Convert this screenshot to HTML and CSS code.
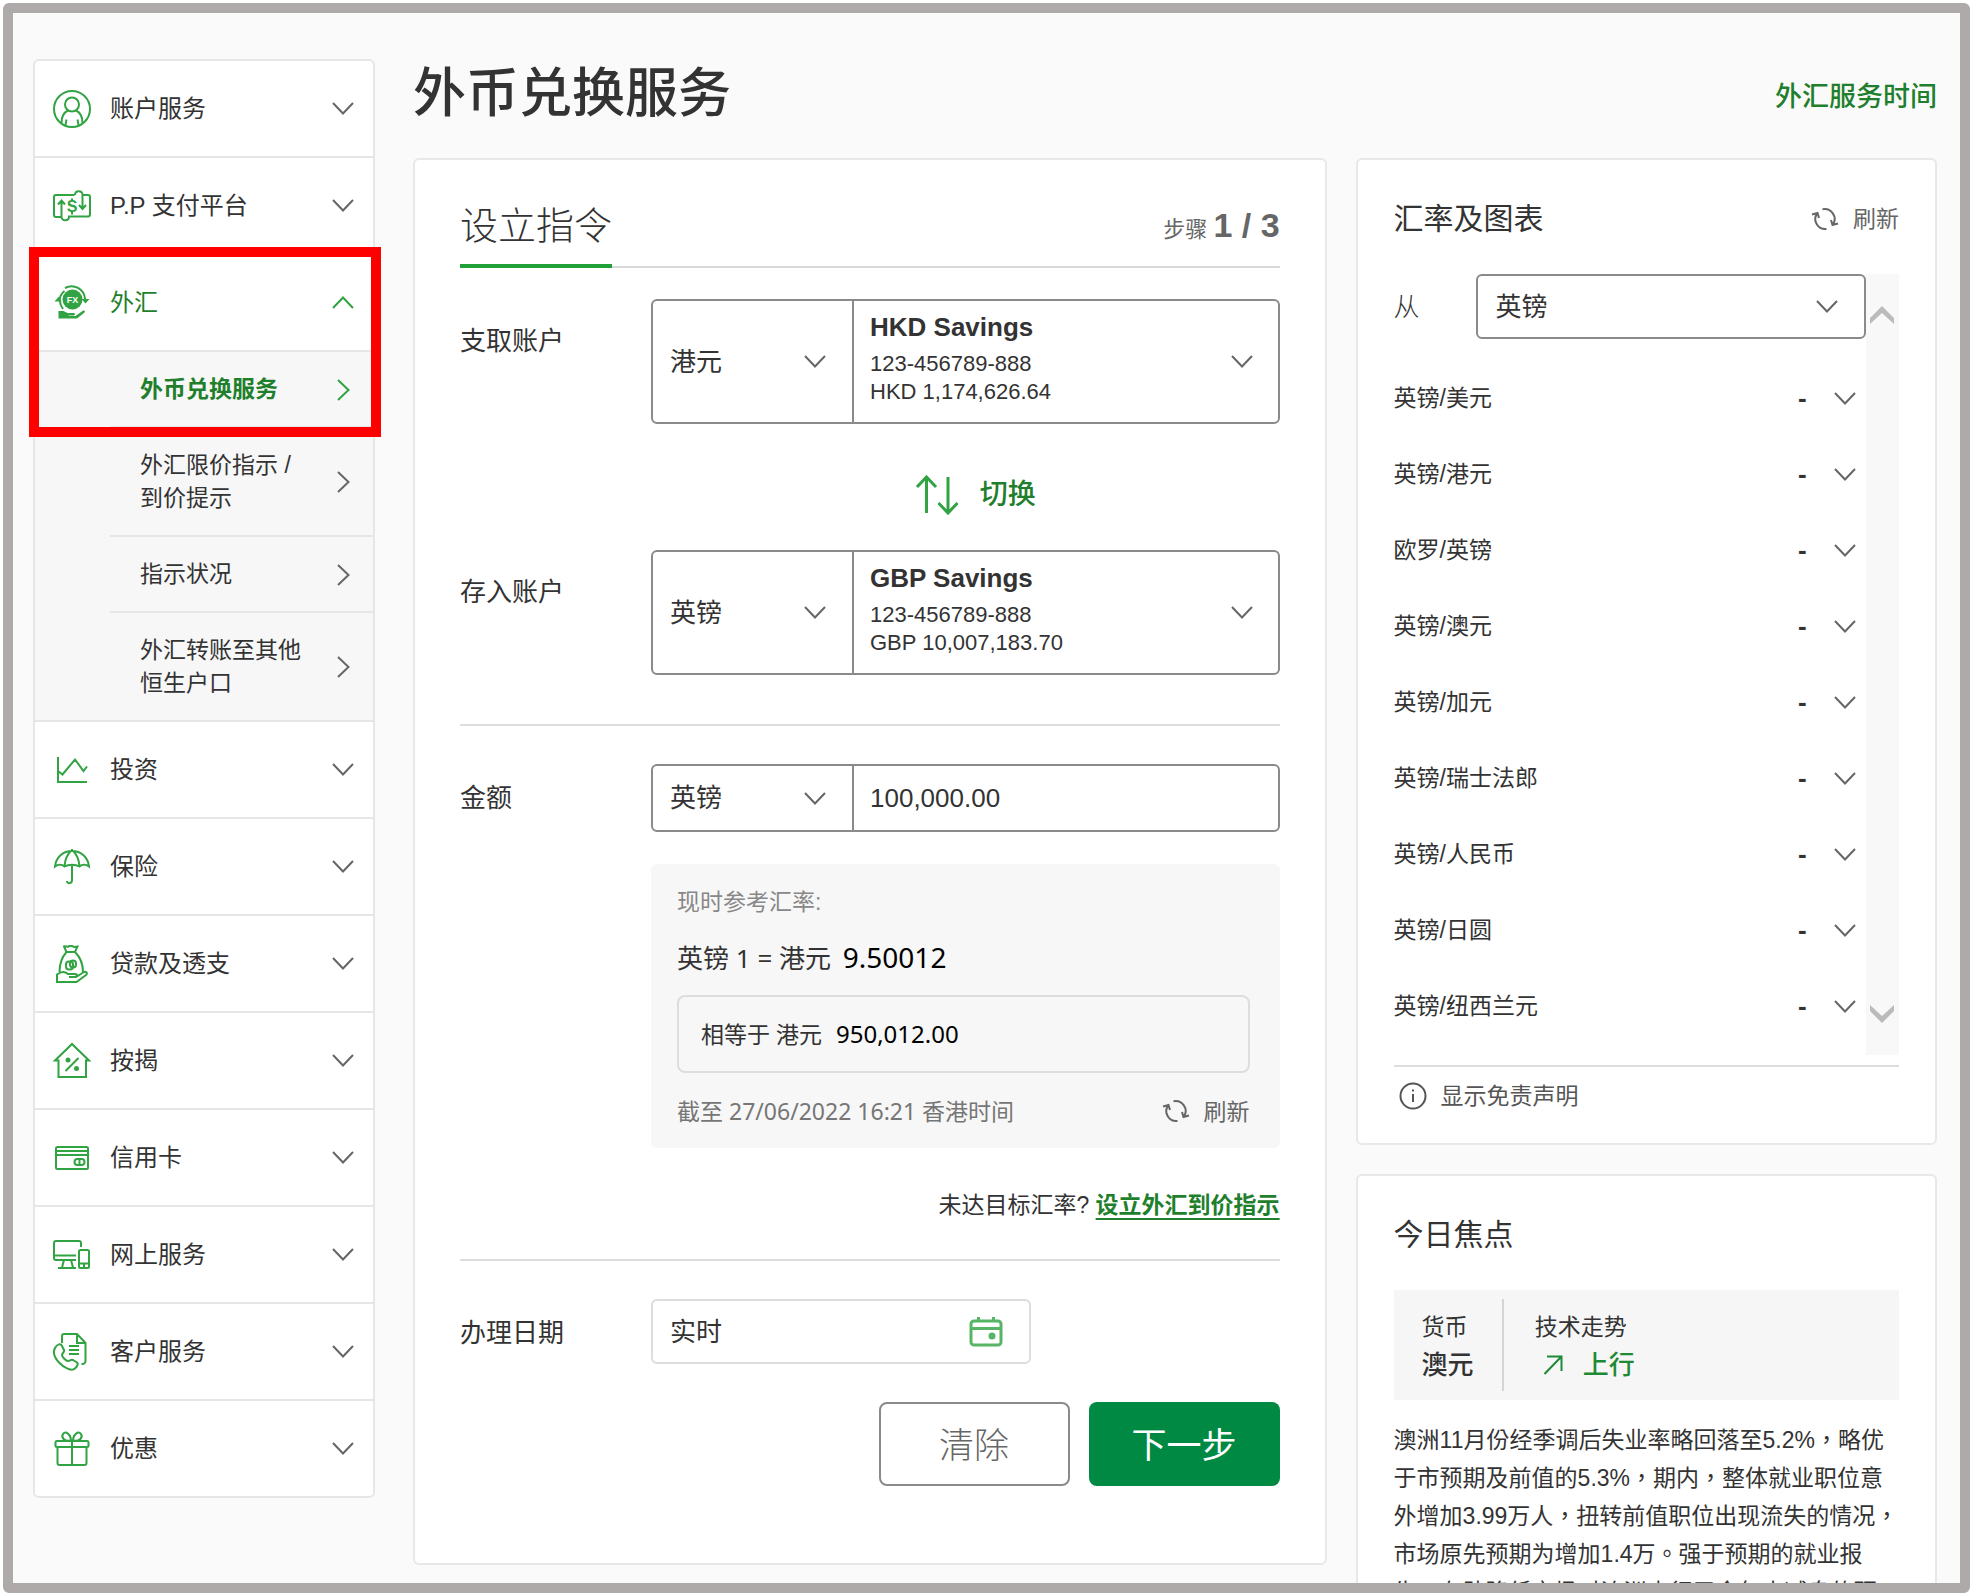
FILE: index.html
```html
<!DOCTYPE html>
<html lang="zh-Hans">
<head>
<meta charset="utf-8">
<meta name="viewport" content="width=device-width, initial-scale=1">
<title>外币兑换服务</title>
<link rel="stylesheet" href="styles.css">
</head>
<body>
<svg class="sprite" aria-hidden="true">
  <symbol id="down" viewBox="0 0 22 13"><path d="M1 1l10 10.500L21 1"/></symbol>
  <symbol id="up" viewBox="0 0 22 13"><path d="M1 12L11 1.500 21 12"/></symbol>
  <symbol id="right" viewBox="0 0 13 22"><path d="M1 1l10.500 10L1 21"/></symbol>
  <symbol id="refresh" viewBox="0 0 28 24"><path d="M6 6.500A10 10 0 0 0 15.500 22M11.500 2.300A10 10 0 0 1 22 17.500M1 7.500l5.500-1.500 1.500 5M27 16.500L21.500 18 20 13"/></symbol>
</svg>
<div class="frame">
  <nav class="sidebar" aria-label="主目录">
    <ul class="menu">
      <li><button class="menu-row" type="button">
        <svg class="icon" viewBox="0 0 38 38"><circle cx="19" cy="19" r="18"/><circle cx="19" cy="14.500" r="7"/><path d="M8.500 33c0-6.500 2.500-10.500 6.500-12.500M29.500 33c0-6.500-2.500-10.500-6.500-12.500M13.500 29.500L12.500 35M24.500 29.500l1 5.500"/></svg>
        <span>账户服务</span><svg class="chevron"><use href="#down"/></svg></button></li>
      <li><button class="menu-row" type="button">
        <svg class="icon" viewBox="0 0 38 38"><path d="M21.500 8H3a2 2 0 0 0-2 2v18a2 2 0 0 0 2 2h5.500V14M5 17.500L8.500 13.500 12 17.500M8.500 30c0 4.500 7.500 4.500 7.500-.500h19a2 2 0 0 0 2-2V10a2 2 0 0 0-2-2h-5.500v13M26 18l3.500 4L33 18M29.500 8c0-5-7.500-5-7.500 0"/><text x="19" y="25" class="icon-text">S</text><path d="M19 11.500v2.500M19 25v2.500"/></svg>
        <span>P.P 支付平台</span><svg class="chevron"><use href="#down"/></svg></button></li>
      <li class="highlighted"><button class="menu-row open" type="button" aria-expanded="true">
        <svg class="icon" viewBox="0 0 38 38"><circle class="solid" cx="19.500" cy="15.500" r="10"/><path d="M12 4a13.500 13.500 0 0 1 20 11M6.500 17a13 13 0 0 1 5-10M7 17c0 4 1.500 6 3 8"/><path class="solid" d="M1.500 17.500l4.500-5 2.500 5zM28.500 15h8l-4 4.500z"/><path class="solid" d="M5.500 27h5l4 2h6c2 0 2 2 0 2.500h-5v.500h7l7-5c2-1 3 0 2 1.500L24 34.500H5.500z"/><text x="19.500" y="19" class="fx-text">FX</text></svg>
        <span>外汇</span><svg class="chevron"><use href="#up"/></svg></button>
        <ul class="submenu">
          <li><a class="current" href="#" aria-current="page"><span>外币兑换服务</span><svg class="arrow"><use href="#right"/></svg></a></li>
          <li><a href="#"><span>外汇限价指示 /<br>到价提示</span><svg class="arrow"><use href="#right"/></svg></a></li>
          <li><a href="#"><span>指示状况</span><svg class="arrow"><use href="#right"/></svg></a></li>
          <li><a href="#"><span>外汇转账至其他<br>恒生户口</span><svg class="arrow"><use href="#right"/></svg></a></li>
        </ul></li>
      <li><button class="menu-row" type="button">
        <svg class="icon" viewBox="0 0 38 38"><path d="M5 6v25h29M5 20l4.500 3.500L22 8.500l8.500 11.500 3.500-4.500"/></svg>
        <span>投资</span><svg class="chevron"><use href="#down"/></svg></button></li>
      <li><button class="menu-row" type="button">
        <svg class="icon" viewBox="0 0 38 38"><path d="M2 18.500C3 9 10 3 19 3s16 6 17 15.500c-3-2.500-7-2.500-9.500 0-4-2.500-11-2.500-15 0-2.500-2.500-6.500-2.500-9.500 0zM19 1v2M11.500 18.500C12 12 14.500 6 18 3M26.500 18.500C26 12 23.500 6 20 3M19 17v15c0 4-5 4-5 1"/></svg>
        <span>保险</span><svg class="chevron"><use href="#down"/></svg></button></li>
      <li><button class="menu-row" type="button">
        <svg class="icon" viewBox="0 0 38 38"><path d="M13.500 7L11 1.500c2-1 3.500 1 4.500 0s3.500-1 4.500 0 3 0 4.500 0L22 7zM13.500 7C9 12 6.500 18 6.500 27M22 7c5 5 8 11 8 20M4 29.500c4-3 8-3 11-.500h7c2.500 0 2.500 2.500 0 3h-6 7l8-5c2-1 4 1 2 3l-9.500 7H4z"/><rect x="13" y="16.500" width="7" height="8" rx="3"/><rect x="17" y="15.500" width="6" height="7" rx="3"/></svg>
        <span>贷款及透支</span><svg class="chevron"><use href="#down"/></svg></button></li>
      <li><button class="menu-row" type="button">
        <svg class="icon" viewBox="0 0 38 38"><path d="M2 18.500L19 2l17 16.500h-3V35H5.500V18.500zM25.500 16l-13 13"/><circle class="solid" cx="15" cy="18" r="2.500"/><circle class="solid" cx="23.500" cy="26.500" r="2.500"/></svg>
        <span>按揭</span><svg class="chevron"><use href="#down"/></svg></button></li>
      <li><button class="menu-row" type="button">
        <svg class="icon" viewBox="0 0 38 38"><rect x="3" y="8" width="32" height="22" rx="1.500"/><path d="M3 12h32M3 16h32M26.500 20v6"/><rect x="21.500" y="20" width="10" height="6" rx="3"/></svg>
        <span>信用卡</span><svg class="chevron"><use href="#down"/></svg></button></li>
      <li><button class="menu-row" type="button">
        <svg class="icon" viewBox="0 0 38 38"><path d="M28 11V7a2 2 0 0 0-2-2H3a2 2 0 0 0-2 2v15a2 2 0 0 0 2 2h20M1 19.500h22M11 24l-2 7.500M18 24l2 7.500M5 32h18"/><rect x="26" y="14" width="10" height="18" rx="1.500"/><path d="M26 27.500h10M31 27.500V32"/></svg>
        <span>网上服务</span><svg class="chevron"><use href="#down"/></svg></button></li>
      <li><button class="menu-row" type="button">
        <svg class="icon" viewBox="0 0 38 38"><path d="M9 10V3a2 2 0 0 1 2-2h13l8.500 9v18a3 3 0 0 1-3 3h-1M24 1v9h8.500M16 13h10M16 17h10M16 21h10M2 15c2-4 6-5 7-2l2 4c1 2-2 3-2 5s4 6 6 6 3-2 5-1l4 2.500c2 2-1 6-4 7C13 38-3 25 2 15z"/></svg>
        <span>客户服务</span><svg class="chevron"><use href="#down"/></svg></button></li>
      <li><button class="menu-row" type="button">
        <svg class="icon" viewBox="0 0 38 38"><rect x="2.500" y="11" width="33" height="6" rx="1.500"/><path d="M4.500 17v16a2 2 0 0 0 2 2h25a2 2 0 0 0 2-2V17M19 11v24M18 10.500C11 12 8 7 10 4c3-4 8 1 8 6.500zM20 10.500C27 12 30 7 28 4c-3-4-8 1-8 6.500z"/></svg>
        <span>优惠</span><svg class="chevron"><use href="#down"/></svg></button></li>
    </ul>
  </nav>

  <main class="main">
    <header class="page-head">
      <h1>外币兑换服务</h1>
      <a href="#">外汇服务时间</a>
    </header>
    <div class="columns">
      <form class="card order">
        <div class="order-head">
          <h2>设立指令</h2>
          <p class="step">步骤 <b>1 / 3</b></p>
        </div>

        <div class="field">
          <label for="from-currency">支取账户</label>
          <div class="account">
            <div class="select"><select id="from-currency"><option>港元</option></select><svg class="chevron"><use href="#down"/></svg></div>
            <button class="account-pick" type="button" aria-haspopup="listbox">
              <span class="account-text"><b>HKD Savings</b><span>123-456789-888</span><span>HKD 1,174,626.64</span></span>
              <svg class="chevron"><use href="#down"/></svg>
            </button>
          </div>
        </div>

        <div class="swap">
          <button type="button"><svg viewBox="0 0 44 40"><path d="M11.500 38V2M2 12l9.500-10L21 12M33 2v36M23.500 28L33 38l9.500-10"/></svg>切换</button>
        </div>

        <div class="field">
          <label for="to-currency">存入账户</label>
          <div class="account">
            <div class="select"><select id="to-currency"><option>英镑</option></select><svg class="chevron"><use href="#down"/></svg></div>
            <button class="account-pick" type="button" aria-haspopup="listbox">
              <span class="account-text"><b>GBP Savings</b><span>123-456789-888</span><span>GBP 10,007,183.70</span></span>
              <svg class="chevron"><use href="#down"/></svg>
            </button>
          </div>
        </div>

        <hr class="after-accounts">

        <div class="field">
          <label for="amount">金额</label>
          <div class="amount-column">
            <div class="account amount">
              <div class="select"><select aria-label="金额货币"><option>英镑</option></select><svg class="chevron"><use href="#down"/></svg></div>
              <input id="amount" type="text" value="100,000.00">
            </div>
            <section class="quote">
              <p class="quote-title">现时参考汇率:</p>
              <p class="quote-rate">英镑 1 = 港元 <span>9.50012</span></p>
              <p class="quote-total">相等于 港元 <span>950,012.00</span></p>
              <div class="quote-foot">
                <span>截至 27/06/2022 16:21 香港时间</span>
                <button class="refresh" type="button"><svg><use href="#refresh"/></svg>刷新</button>
              </div>
            </section>
          </div>
        </div>

        <p class="target">未达目标汇率? <a href="#">设立外汇到价指示</a></p>
        <hr>

        <div class="field">
          <label for="date">办理日期</label>
          <div class="date">
            <input id="date" type="text" value="实时">
            <svg viewBox="0 0 34 30"><rect x="2" y="4" width="30" height="24" rx="3"/><path d="M3 11.500h28M9.500 0v5M24.500 0v5"/><circle cx="23" cy="19" r="3.500"/></svg>
          </div>
        </div>

        <div class="actions">
          <button class="clear" type="reset">清除</button>
          <button class="next" type="submit">下一步</button>
        </div>
      </form>

      <div class="side">
        <section class="card panel rates">
          <div class="panel-head">
            <h2>汇率及图表</h2>
            <button class="refresh" type="button"><svg><use href="#refresh"/></svg>刷新</button>
          </div>
          <div class="rates-body">
            <div class="rates-list">
              <div class="base">
                <label for="base">从</label>
                <div class="select boxed"><select id="base"><option>英镑</option></select><svg class="chevron"><use href="#down"/></svg></div>
              </div>
              <table>
                <tr><th scope="row">英镑/美元</th><td>-</td><td><button type="button" aria-label="展开英镑/美元"><svg class="chevron"><use href="#down"/></svg></button></td></tr>
                <tr><th scope="row">英镑/港元</th><td>-</td><td><button type="button" aria-label="展开英镑/港元"><svg class="chevron"><use href="#down"/></svg></button></td></tr>
                <tr><th scope="row">欧罗/英镑</th><td>-</td><td><button type="button" aria-label="展开欧罗/英镑"><svg class="chevron"><use href="#down"/></svg></button></td></tr>
                <tr><th scope="row">英镑/澳元</th><td>-</td><td><button type="button" aria-label="展开英镑/澳元"><svg class="chevron"><use href="#down"/></svg></button></td></tr>
                <tr><th scope="row">英镑/加元</th><td>-</td><td><button type="button" aria-label="展开英镑/加元"><svg class="chevron"><use href="#down"/></svg></button></td></tr>
                <tr><th scope="row">英镑/瑞士法郎</th><td>-</td><td><button type="button" aria-label="展开英镑/瑞士法郎"><svg class="chevron"><use href="#down"/></svg></button></td></tr>
                <tr><th scope="row">英镑/人民币</th><td>-</td><td><button type="button" aria-label="展开英镑/人民币"><svg class="chevron"><use href="#down"/></svg></button></td></tr>
                <tr><th scope="row">英镑/日圆</th><td>-</td><td><button type="button" aria-label="展开英镑/日圆"><svg class="chevron"><use href="#down"/></svg></button></td></tr>
                <tr><th scope="row">英镑/纽西兰元</th><td>-</td><td><button type="button" aria-label="展开英镑/纽西兰元"><svg class="chevron"><use href="#down"/></svg></button></td></tr>
              </table>
            </div>
            <div class="scroller">
              <button type="button" aria-label="向上"><svg viewBox="0 0 24 18"><path d="M12 0l12 12v6L12 7 0 18v-6z"/></svg></button>
              <button type="button" aria-label="向下"><svg viewBox="0 0 24 18"><path d="M12 18L24 6V0L12 11 0 0v6z"/></svg></button>
            </div>
          </div>
          <hr>
          <button class="disclaimer" type="button"><svg viewBox="0 0 28 28"><circle cx="14" cy="14" r="12.500"/><path d="M14 12v8M14 7.500v2"/></svg>显示免责声明</button>
        </section>

        <section class="card panel">
          <div class="panel-head"><h2>今日焦点</h2></div>
          <dl class="focus">
            <div><dt>货币</dt><dd>澳元</dd></div>
            <div><dt>技术走势</dt><dd class="rise"><svg viewBox="0 0 20 20"><path d="M1.500 19L18 2M4 1.500h14.500V16"/></svg>上行</dd></div>
          </dl>
          <p class="story" lang="zh-Hant">澳洲11月份经季调后失业率略回落至5.2%，略优于市预期及前值的5.3%，期内，整体就业职位意外增加3.99万人，扭转前值职位出现流失的情况，市场原先预期为增加1.4万。强于预期的就业报告，有助降低市场对澳洲央行于今年内减息的预期。</p>
        </section>
      </div>
    </div>
  </main>
</div>
</body>
</html>
```
FILE: styles.css
```css
* { box-sizing: border-box; }

body {
  margin: 0;
  height: 100vh;
  padding: 3px 0 2px 3px;
  overflow: hidden;
  background: #fff;
  color: #333;
  font: 23px/34px "Liberation Sans", "Noto Sans CJK SC", sans-serif;
}

h1, h2, p, ul, dl, dd { margin: 0; padding: 0; }
ul { list-style: none; }
svg { display: block; flex: none; fill: none; stroke: currentColor; stroke-width: 2; }
.sprite { position: absolute; width: 0; height: 0; }
button, input, select { margin: 0; padding: 0; border: 0; background: none; color: inherit; font: inherit; }
select { appearance: none; }
hr { width: 100%; height: 2px; margin: 0; border: 0; background: #ddd; }

.frame {
  display: flex;
  align-items: flex-start;
  gap: 38px;
  height: 100%;
  padding: 0 23px 0 20px;
  overflow: hidden;
  border: 10px solid #aeaaaa;
  border-radius: 6px;
  background: #fafafa;
}

.chevron { width: 22px; height: 13px; color: #666; }
.arrow { width: 13px; height: 22px; color: #666; }

/* Sidebar */
.sidebar { flex: none; width: 342px; margin-top: 46px; border: 2px solid #e6e6e6; border-radius: 6px; background: #fff; }
.menu > li { border-bottom: 2px solid #e6e6e6; }
.menu > li:last-child { border-bottom: 0; }
.menu-row {
  display: flex;
  align-items: center;
  gap: 19px;
  width: 100%;
  height: 95px;
  padding: 0 19px 0 18px;
  font-size: 24px;
  text-align: left;
}
.menu-row span { flex: 1; }
.icon { width: 38px; height: 38px; color: #31a343; }
.icon .solid { fill: currentColor; stroke: none; }
.icon-text, .fx-text { stroke: none; text-anchor: middle; font-weight: 700; }
.icon-text { fill: currentColor; font-size: 16px; }
.fx-text { fill: #fff; font-size: 9px; }
.menu-row.open { color: #1f7f2d; }
.open .chevron, .current .arrow { color: #31a343; }
.highlighted { position: relative; }
.highlighted::after {
  content: "";
  position: absolute;
  inset: -8px -8px auto -6px;
  box-sizing: border-box;
  height: 190px;
  border: 10px solid #f00;
  pointer-events: none;
}
.submenu { padding-left: 75px; border-top: 2px solid #e6e6e6; background: #f7f7f7; }
.submenu li { border-bottom: 2px solid #e6e6e6; }
.submenu li:last-child { border-bottom: 0; }
.submenu a {
  display: flex;
  align-items: center;
  justify-content: space-between;
  min-height: 74px;
  padding: 21px 23px 20px 30px;
  color: inherit;
  line-height: 33px;
  text-decoration: none;
}
.submenu .current { color: #1f7f2d; font-weight: 700; }

/* Page heading */
.main { flex: 1; min-width: 0; padding-top: 45px; }
.page-head { display: flex; align-items: center; justify-content: space-between; margin-bottom: 28px; }
.page-head h1 { font-size: 53px; font-weight: 500; line-height: 72px; }
.page-head a { padding-top: 6px; color: #1f7f2d; font-size: 27px; font-weight: 500; text-decoration: none; }

.columns { display: grid; grid-template-columns: minmax(0, 11fr) minmax(0, 7fr); align-items: start; gap: 29px; }
.card { border: 2px solid #e8e8e8; border-radius: 6px; background: #fff; }

/* Order form */
.order { padding: 28px 45px 77px; }
.order-head { display: flex; align-items: center; justify-content: space-between; margin-bottom: 31px; border-bottom: 2px solid #d8d8d8; }
.order-head h2 { margin-bottom: -2px; border-bottom: 4px solid #21a038; font-size: 38px; font-weight: 300; line-height: 76px; }
.step { color: #666; font-size: 22px; }
.step b { font-size: 34px; }

.field { display: grid; grid-template-columns: 191px minmax(0, 1fr); align-items: start; }
.field > label { padding-top: 18px; font-size: 26px; line-height: 32px; }
.account {
  display: grid;
  grid-template-columns: 199px minmax(0, 1fr);
  height: 125px;
  border: 2px solid #8a8a8a;
  border-radius: 6px;
}
.field:has(.account-pick) > label { padding-top: 26px; }
.account > :last-child { border-left: 2px solid #8a8a8a; }
.select { display: grid; align-items: center; }
.select > * { grid-area: 1 / 1; }
.select select { width: 100%; height: 100%; padding-left: 17px; font-size: 26px; }
.select .chevron { justify-self: end; margin-right: 26px; pointer-events: none; }
.account-pick { display: flex; align-items: center; justify-content: space-between; padding: 0 25px 0 16px; text-align: left; }
.account-text { display: grid; padding-bottom: 12px; font-size: 22px; line-height: 28px; }
.account-text b { font-size: 26px; line-height: 45px; }

.swap { display: flex; justify-content: center; height: 126px; padding: 16px 0 0 211px; }
.swap button { display: flex; align-items: center; gap: 21px; color: #1f7f2d; font-size: 28px; font-weight: 500; }
.swap svg { width: 44px; height: 40px; color: #31a343; stroke-width: 3; }
.after-accounts { margin: 49px 0 38px; }
.account.amount { height: 68px; }
.amount input { width: 100%; min-width: 0; padding-left: 16px; font-size: 26px; }

.quote { margin-top: 32px; padding: 21px 30px 17px 26px; border-radius: 6px; background: #f7f7f7; }
.quote-title { color: #888; }
.quote-rate { margin: 18px 0 17px; font-size: 26px; line-height: 40px; }
.quote-rate, .quote-total, .quote-foot { font-family: "Noto Sans", "Noto Sans CJK SC", sans-serif; }
.quote-rate span { margin-left: 5px; color: #000; font-size: 28px; }
.quote-total { padding: 0 22px; border: 2px solid #ddd; border-radius: 8px; line-height: 73px; }
.quote-total span { margin-left: 8px; color: #000; font-size: 24px; }
.quote-foot { display: flex; justify-content: space-between; margin-top: 18px; color: #767676; line-height: 40px; }
.refresh { display: flex; align-items: center; gap: 14px; color: #666; }
.refresh svg { width: 28px; height: 24px; }

.target { margin: 40px 0 37px; text-align: right; }
.target a { color: #1f7f2d; font-weight: 700; text-decoration: underline; text-decoration-thickness: 2px; text-underline-offset: 5px; }
.target + hr { margin-bottom: 38px; }

.date { display: flex; align-items: center; justify-content: space-between; width: 380px; height: 65px; padding: 0 26px 0 17px; border: 2px solid #ddd; border-radius: 6px; }
.date input { flex: 1; min-width: 0; font-size: 26px; }
.date svg { width: 34px; height: 30px; color: #58b566; stroke-width: 3; }
.date circle { fill: currentColor; stroke: none; }

.actions { display: flex; justify-content: flex-end; gap: 19px; margin-top: 38px; }
.actions button { width: 191px; height: 84px; padding-top: 4px; border-radius: 8px; font-size: 35px; font-weight: 300; }
.clear { border: 2px solid #8a8a8a; color: #666; }
.actions .next { background: #008943; color: #fff; font-weight: 400; }

/* Right column */
.side { display: grid; gap: 29px; }
.panel { padding: 37px 36px 30px; }
.panel-head { display: flex; align-items: center; justify-content: space-between; margin-bottom: 33px; }
.panel-head h2 { font-size: 30px; font-weight: 400; line-height: 44px; }
.rates-body { display: flex; margin-bottom: 10px; }
.rates-list { flex: 1; padding-bottom: 11px; }
.base { display: grid; grid-template-columns: 82px minmax(0, 1fr); align-items: center; margin-bottom: 21px; }
.base label { font-size: 26px; font-weight: 300; }
.boxed { height: 65px; border: 2px solid #8a8a8a; border-radius: 6px; }
.boxed select { padding-left: 18px; }
table { width: 100%; border-collapse: collapse; table-layout: fixed; }
th, td { height: 76px; padding: 0; }
th { font-weight: 400; text-align: left; }
td { width: 34px; font-size: 26px; font-weight: 700; }
td:last-child { padding-left: 2px; }
td button { display: block; }
.scroller { display: flex; flex-direction: column; justify-content: space-between; align-items: center; width: 33px; padding: 32px 5px 32px 3px; background: #f8f8f8; }
.scroller svg { width: 24px; height: 18px; fill: #bbb; stroke: none; }
.disclaimer { display: flex; align-items: center; gap: 14px; margin: 12px 0 0 5px; color: #555; }
.disclaimer svg { width: 28px; height: 28px; }

.focus { display: flex; padding: 9px 0; background: #f6f6f6; line-height: 38px; }
.focus div { padding: 9px 28px 7px; }
.focus div + div { padding-left: 31px; border-left: 2px solid #d5d5d5; }
.focus dd { font-size: 26px; font-weight: 500; }
.focus .rise { display: flex; align-items: center; gap: 20px; padding-left: 8px; color: #1f8a35; }
.rise svg { width: 20px; height: 20px; }
.story { margin-top: 21px; font-family: "Liberation Sans", "Noto Sans CJK TC", sans-serif; line-height: 38px; }
```
